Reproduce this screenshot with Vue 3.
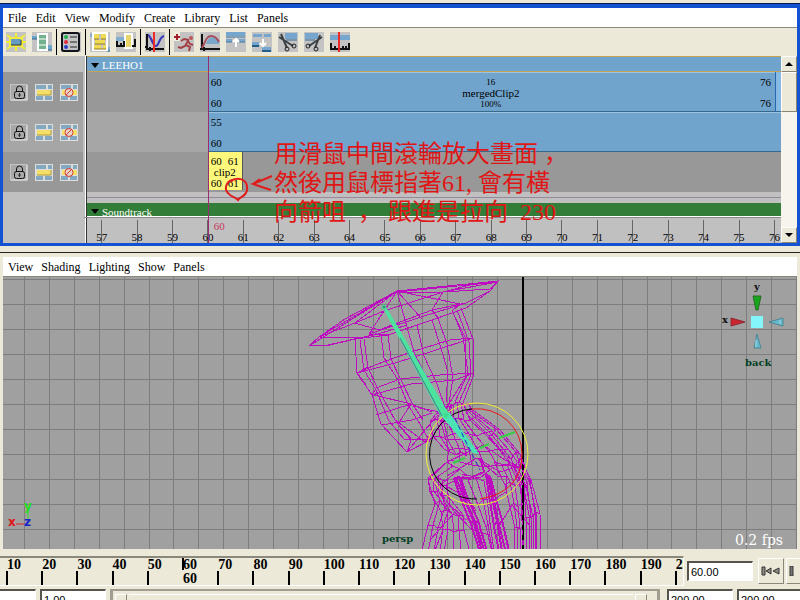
<script setup>
import { ref } from 'vue';

const editorMenu = ['File', 'Edit', 'View', 'Modify', 'Create', 'Library', 'List', 'Panels'];
const panelMenu = ['View', 'Shading', 'Lighting', 'Show', 'Panels'];

const tools = [
  'clip', 'pose', '|', 'outline', '|', 'load', 'frame', '|', 'graph', '|',
  'character', 'warp', 'up', 'down', 'cutLeft', 'cutRight', 'time',
];
const titles = {
  clip: 'Create clip', pose: 'Create pose', outline: 'Outliner', load: 'Load characters',
  frame: 'Frame all', graph: 'Graph curves', character: 'Create character', warp: 'Time warp',
  up: 'Move up', down: 'Move down', cutLeft: 'Trim before', cutRight: 'Trim after', time: 'Go to time',
};

const tracks = [1, 2, 3];
const rulerFrames = Array.from({ length: 20 }, (_, i) => 57 + i);
const sliderFrames = Array.from({ length: 20 }, (_, i) => 10 + i * 10);

const currentTime = ref('60.00');
const rangeStart = ref('1.00');
const playbackStart = ref('1.00');
const playbackEnd = ref('200.00');
const rangeEnd = ref('200.00');

const gridX = Array.from({ length: 33 }, (_, i) => Math.round(24 + i * 24.9));
const gridY = Array.from({ length: 11 }, (_, i) => 279 + i * 25);

// Lines of the hat and the head
const headLines = [
  '309,346 330,345 355,339 388,335 432,320 466,308 490,291 498,281 397,291 309,346',
  '309,346 319,337 397,291 355,323 319,337 359,338 378,334 407,325',
  '319,337 345,319 397,291', '397,292 498,282 443,292 397,292', '443,292 490,289 498,282',
  '355,323 384,311 443,292 478,283', '355,323 379,330 432,310 466,303 490,291',
  '397,291 384,311 369,334 388,335', '397,291 407,327', '397,291 422,319', '397,291 460,304 452,311',
  '443,292 432,310 438,318', '369,334 421,317 466,303', '328,345 359,338', '371,331 381,336',
  '355,339 357,373 372,395 381,424 407,452 430,440 446,416',
  '360,340 364,370 376,390 389,421 404,439 430,440', '364,339 368,368 378,389 395,420 412,440',
  '381,335 384,358 398,380 408,405 420,424 430,442', '388,335 391,359 401,380 413,405 423,420',
  '407,327 415,355 430,383 438,410', '417,325 424,356 437,384 446,410',
  '432,320 440,345 448,372 446,402', '438,318 447,344 453,378 449,403',
  '452,310 463,337 468,373 455,402', '457,310 469,342 471,375 459,402', '461,308 473,339 474,374 463,403',
  '452,311 466,339 465,378 450,402', '357,373 375,365 411,352 450,340 473,338',
  '357,373 395,363 430,352 473,338', '372,395 376,388 400,379 440,375 474,373',
  '372,395 411,384 455,380 474,373', '366,385 357,373 368,367',
  '374,395 411,404 432,412', '376,415 411,404 420,408 440,412', '382,425 412,420 432,413',
  '407,452 411,440 398,424 411,404', '407,452 425,430 438,415', '395,420 425,442 434,430',
];

const parse = (line) => line.split(' ').map((p) => p.split(',').map(Number));

/**
 * Fill the band between two edges with lengthwise lines and cross rungs.
 */
const band = (edgeA, edgeB, count) => {
  const a = parse(edgeA);
  const b = parse(edgeB);
  const at = (i, t) => [
    Math.round(a[i][0] + (b[i][0] - a[i][0]) * t),
    Math.round(a[i][1] + (b[i][1] - a[i][1]) * t + Math.sin(t * 9 + i) * 2),
  ].join(',');
  const lines = [];
  for (let k = 0; k <= count; k++) {
    lines.push(a.map((_, i) => at(i, k / count)).join(' '));
  }
  a.forEach((_, i) => {
    lines.push(Array.from({ length: count + 1 }, (_, k) => at(i, k / count)).join(' '));
  });
  return lines;
};

const bodyLines = [
  // neck and collar
  ...band('446,406 441,420 445,435 449,450 447,462', '468,402 476,418 492,433 509,451 522,468', 6),
  ...band('446,406 436,412 430,420 433,436 444,451', '452,403 450,415 457,425 462,441 467,455', 4),
  // shoulder and arm on the right
  ...band('470,408 500,428 520,452 530,480 535,515 535,552', '466,412 488,436 507,459 521,490 522,520 522,552', 3),
  ...band('520,458 531,478 540,512 541,552', '514,468 524,490 529,517 530,552', 3),
  // left sleeve
  ...band('447,462 428,478 435,502 428,525 422,552', '466,474 446,486 450,506 443,528 440,552', 3),
  ...band('428,478 430,490 441,510 443,530 435,552', '447,479 447,496 463,517 464,531 470,552', 4),
  // shirt
  ...band('468,480 478,503 486,525 492,552', '484,480 487,500 490,525 494,552', 2),
  ...band('494,462 505,483 510,505 515,528 514,552', '514,466 520,485 522,505 522,528 524,552', 3),
  '428,478 447,462 483,445 505,460 520,468', '447,476 477,458 500,472 523,465',
  '446,486 466,497 476,510 466,520 450,505', '430,540 455,512 472,530 490,535', '497,530 512,505 532,528',
  '477,458 498,476 506,476 506,492 496,498', '462,474 480,478 492,468',
];

const lapelLines = [
  ...band('454,478 462,500 471,522 480,552', '461,478 468,500 478,522 487,552', 3),
  ...band('486,474 490,500 494,524 499,552', '491,478 496,500 502,522 509,552', 3),
  '454,478 470,478 484,472 480,458',
];
</script>

<template>
  <div class="app">
    <section class="editor">
      <nav class="menubar">
        <button v-for="item in editorMenu" :key="item" type="button">{{ item }}</button>
      </nav>

      <div class="toolbar">
        <template v-for="(tool, i) in tools" :key="i">
          <span v-if="tool === '|'" class="sep"></span>
          <button v-else type="button" class="tool" :aria-label="titles[tool]">
            <svg viewBox="0 0 20 20" width="20" height="20" fill="none">
              <rect width="20" height="20" fill="#c3c3c3" />
              <g v-if="tool === 'clip'">
                <path d="M1 3l4 3M10 1v4M19 3l-4 3M1 17l4-3M10 19v-4M19 17l-4-3M0 10h3M17 10h3" stroke="#f3ed3c" stroke-width="2" />
                <rect x="4" y="6" width="12" height="8" fill="#659bc5" stroke="#f3ed3c" stroke-width="2" />
                <path d="M5 13h10V8" stroke="#333" />
              </g>
              <g v-else-if="tool === 'pose'">
                <path d="M0 4h9v3H0zM13 13h7v5h-7z" fill="#6fa4cc" />
                <path d="M0 7h5M15 18h5" stroke="#35678b" />
                <rect x="6" y="2" width="9" height="16" fill="#72b38d" stroke="#fff" stroke-width="2" />
                <path d="M6 7h9M6 13h9" stroke="#fff" />
              </g>
              <g v-else-if="tool === 'outline'">
                <rect x="1" y="1" width="17" height="18" rx="2" stroke="#10131c" stroke-width="2" />
                <circle cx="5" cy="5" r="2" fill="#23af50" />
                <circle cx="5" cy="10" r="2" fill="#df293d" />
                <circle cx="5" cy="15" r="2" fill="#2b3fcd" />
                <path d="M9 5h7M9 10h7M9 15h7" stroke="#222" />
              </g>
              <g v-else-if="tool === 'load'">
                <path d="M0 2h5v3H0zM17 15h3v4h-3z" fill="#7faed1" />
                <path d="M17 19h3" stroke="#35678b" />
                <rect x="3" y="1" width="14" height="17" stroke="#fff" stroke-width="2" />
                <path d="M4 2h5v5H4zM11 2h5v5h-5zM5 8h10v4H5zM4 13h7v4H4zM13 13h3v4h-3z" fill="#f0db55" />
                <path d="M4 7h5M11 7h5M5 12h10M4 17h12" stroke="#967f20" />
              </g>
              <g v-else-if="tool === 'frame'">
                <path d="M0 5h8v4H0z" fill="#7faed1" />
                <rect x="9" y="2" width="7" height="14" fill="#e8d469" stroke="#fff" stroke-width="2" />
                <path d="M0 14h8V9M1 9v5M5 11v3M16 14h3V7" stroke="#111" stroke-width="2" />
              </g>
              <g v-else-if="tool === 'graph'">
                <path d="M2 2v15h17M0 15h3M5 15v4" stroke="#111" stroke-width="2" />
                <path d="M3 5c6 0 5 9 8 9s4-9 8-10" stroke="#c43b60" />
                <path d="M3 3c3 0 4 11 8 11 3 0 3-9 8-10" stroke="#3338bd" stroke-width="2" />
                <path d="M9 0v20" stroke="#ef2929" stroke-width="2" />
              </g>
              <g v-else-if="tool === 'character'">
                <rect width="6" height="9" fill="#efece0" />
                <path d="M3 2v6M0 5h6" stroke="#a12029" stroke-width="2" />
                <circle cx="17" cy="6" r="2" fill="#bd5758" />
                <path d="M15 8l-5-1-3 2M14 9l-3 5-4 2-3-1M12 13l4 2-1 4M14 9l2 3 3 1" stroke="#a44043" stroke-width="2" />
              </g>
              <g v-else-if="tool === 'warp'">
                <path d="M6 12c2-8 8-9 13-3v3z" fill="#78a7ca" />
                <path d="M2 2v15h18M0 17h4M4 15v4" stroke="#111" stroke-width="2" />
                <path d="M2 16C6 8 7 4 11 4s6 2 8 6" stroke="#a64c5c" stroke-width="2" />
              </g>
              <g v-else-if="tool === 'up'">
                <path d="M0 0h19v4H0zM0 7h6v3H0zM13 7h6v3h-6z" fill="#76a6cd" />
                <path d="M0 5h19M0 10h6M13 10h6" stroke="#477aa0" />
                <path d="M10 15V8M7 10l3-3 3 3" stroke="#fff" stroke-width="2" />
              </g>
              <g v-else-if="tool === 'down'">
                <path d="M1 2h9v3H1zM12 2h7v3h-7zM0 10h7v3H0zM10 15h9v4h-9z" fill="#76a6cd" />
                <path d="M0 14h7M10 19h9" stroke="#235f8c" stroke-width="2" />
                <path d="M11 7v6M8 11l3 3 3-3" stroke="#fff" stroke-width="2" />
              </g>
              <g v-else-if="tool === 'cutLeft'">
                <path d="M7 1h12v6H7z" fill="#76a6cd" />
                <path d="M8 8h11" stroke="#35678b" />
                <path d="M1 5l14 9M3 2l6 14" stroke="#3c4145" stroke-width="2" />
                <circle cx="9" cy="17" r="2" stroke="#222" />
                <circle cx="16" cy="14" r="2" stroke="#222" />
              </g>
              <g v-else-if="tool === 'cutRight'">
                <path d="M1 1h13v6H1z" fill="#76a6cd" />
                <path d="M1 8h10" stroke="#35678b" />
                <path d="M18 5L5 14M16 3l-5 13" stroke="#3c4145" stroke-width="2" />
                <circle cx="4" cy="14" r="2" stroke="#222" />
                <circle cx="12" cy="17" r="2" stroke="#222" />
              </g>
              <g v-else>
                <path d="M0 3h20v5H0z" fill="#76a6cd" />
                <path d="M0 17h20M1 11v6M5 14v3M13 14v3M16 14v3M19 11v6" stroke="#111" stroke-width="2" />
                <path d="M9 0v20" stroke="#ef2929" stroke-width="2" />
              </g>
            </svg>
          </button>
        </template>
      </div>

      <div class="trax">
        <div class="gutter">
          <div class="gutter-head"></div>
          <div v-for="n in tracks" :key="n" class="track-controls">
            <button type="button" class="mini" aria-label="Lock">
              <svg viewBox="0 0 18 17" width="18" height="17" fill="none">
                <rect width="18" height="17" fill="#a9a9a9" />
                <path d="M0 16V0h17" stroke="#ddd" />
                <path d="M17 1v15H1" stroke="#eee" />
                <path d="M6.500 8V5q0-3 3-3t3 3v3" stroke="#111" />
                <rect x="4.500" y="7.500" width="10" height="7" rx="2" stroke="#111" />
                <path d="M9.500 9v4M8 11h3" stroke="#333" />
              </svg>
            </button>
            <button type="button" class="mini" aria-label="Solo">
              <svg viewBox="0 0 18 17" width="18" height="17" fill="none">
                <rect width="18" height="17" fill="#ddd" />
                <path d="M1 1h10v4H1zM13 1h4v4h-4zM1 12h7v4H1zM10 12h7v4h-7z" fill="#84a8bf" />
                <rect x="2" y="6" width="14" height="5" fill="#f4df69" />
                <path d="M2 11h14V6" stroke="#ae9831" />
              </svg>
            </button>
            <button type="button" class="mini" aria-label="Mute">
              <svg viewBox="0 0 18 17" width="18" height="17" fill="none">
                <rect width="18" height="17" fill="#ddd" />
                <path d="M1 1h10v4H1zM13 1h4v4h-4zM1 12h7v4H1zM10 12h7v4h-7z" fill="#84a8bf" />
                <rect x="2" y="6" width="15" height="5" fill="#f4df69" />
                <circle cx="9" cy="8.500" r="4" stroke="#d43d34" fill="#e8d4c8" />
                <path d="M6 11l6-6" stroke="#d43d34" />
              </svg>
            </button>
          </div>
        </div>

        <div class="tracks">
          <div class="group-head"><span class="tri"></span>LEEHO1</div>
          <div class="track">
            <div class="blank"></div>
            <div class="clip">
              <div class="col"><span>60</span><span>60</span></div>
              <div class="clip-name"><small>16</small><span>mergedClip2</span><small>100%</small></div>
              <div class="col"><span>76</span><span>76</span></div>
            </div>
            <div class="clip-hold"></div>
          </div>
          <div class="track even">
            <div class="blank"></div>
            <div class="clip">
              <div class="col"><span>55</span><span>60</span></div>
            </div>
          </div>
          <div class="track">
            <div class="blank"></div>
            <div class="clip yellow">
              <div class="pair"><span>60</span><span>61</span></div>
              <div class="name">clip2</div>
              <div class="pair"><span>60</span><span>61</span></div>
            </div>
          </div>
          <div class="spacer"></div>
          <div class="sound-head"><span class="tri"></span>Soundtrack</div>
          <div class="ruler">
            <span v-for="f in rulerFrames" :key="f">{{ f }}</span>
          </div>
          <div class="playhead"><span>60</span></div>
          <div class="note">
            <svg viewBox="0 0 60 36" width="60" height="36" fill="none" stroke="#e01c1c" stroke-width="2">
              <path d="M9 6C3 8 1 15 5 19c3 4 7 4 10 7 2-4 8-3 9-10C25 8 20 4 13 5c-2 0-4 1-5 3" />
              <path d="M49 2L30 10l18 6M37 5l-7 5" />
            </svg>
            <p>用滑鼠中間滾輪放大畫面 ，<br>然後用鼠標指著61, 會有橫<br>向箭咀 &nbsp;， 跟進是拉向 &nbsp;230</p>
          </div>
        </div>

        <div class="scrollbar">
          <button type="button" aria-label="Scroll up"><i class="arrow up"></i></button>
          <div class="thumb"></div>
          <div class="rail"></div>
          <button type="button" aria-label="Scroll down"><i class="arrow"></i></button>
        </div>
      </div>
    </section>

    <section class="panel">
      <nav class="menubar">
        <button v-for="item in panelMenu" :key="item" type="button">{{ item }}</button>
      </nav>
      <div class="viewport">
        <svg class="scene" viewBox="3 277 794 272" preserveAspectRatio="xMidYMin slice" fill="none">
          <g stroke="#7d7d7d" shape-rendering="crispEdges">
            <line v-for="x in gridX" :key="'x' + x" :x1="x" :x2="x" y1="277" y2="549" />
            <line v-for="y in gridY" :key="'y' + y" x1="3" x2="797" :y1="y" :y2="y" />
          </g>
          <path d="M523 277v272" stroke="#000" stroke-width="2" />
          <g stroke="#bd0cc0" shape-rendering="crispEdges">
            <polyline v-for="(l, i) in headLines" :key="'h' + i" :points="l" />
            <polyline v-for="(l, i) in bodyLines" :key="'b' + i" :points="l" />
            <polyline v-for="(l, i) in lapelLines" :key="'l' + i" :points="l" stroke-width="2" />
          </g>
          <path d="M523 465v84" stroke="#000" stroke-width="2" stroke-dasharray="5 5" />
          <circle cx="477" cy="454" r="51" stroke="#f2ee35" />
          <path d="M472 409a45 45 0 0 0 5 90" stroke="#000" />
          <path d="M472 409a45 45 0 0 1 50 45q0 38-42 45" stroke="#f01616" />
          <path d="M453 463l12-5M480 448l9-4M499 438l16-6" stroke="#35cf45" stroke-width="2" />
          <path d="M384 306l4 4 61 104-8 3-58-109z" fill="#4ce39f" />
          <path d="M400 338l42 78" stroke="#48788f" />
          <path d="M449 412l30 42-6-1-31-36z" fill="#4ce3b4" />
          <path d="M455 418l10 22 15 30" stroke="#2222cf" stroke-dasharray="5 3" />
          <circle cx="384" cy="307" r="2" fill="#398f79" stroke="#4ce39f" />
          <circle cx="446" cy="415" r="3" fill="#3ddc91" stroke="#4ce39f" />
          <path d="M16 524h8" stroke="#df2525" />
          <path d="M28 511v8" stroke="#31e331" />
          <g class="axis local">
            <text x="8" y="526" fill="#e01616">x</text>
            <text x="24" y="526" fill="#1621c8">z</text>
            <text x="24" y="510" fill="#20df20">y</text>
          </g>
          <g class="axis">
            <text x="722" y="323" fill="#111">x</text>
            <text x="754" y="290" fill="#111">y</text>
          </g>
          <path d="M753 296h8l-3 14h-2z" fill="#17a51c" stroke="#246d24" />
          <path d="M731 318l14 4-14 4z" fill="#c92630" stroke="#8e2933" />
          <path d="M783 318l-14 4 14 4zM757 334l4 14h-7z" fill="#65b8cb" stroke="#4d8794" />
          <path d="M780 320v4M756 340v7" stroke="#a7dce5" />
          <rect x="751" y="316" width="12" height="12" fill="#83f5fb" />
          <g class="camera">
            <text x="745" y="366">back</text>
            <text x="382" y="542">persp</text>
          </g>
          <text class="fps" x="735" y="545">0.2 fps</text>
        </svg>
      </div>
    </section>

    <footer>
      <div class="time-row">
        <div class="time-slider">
          <span v-for="f in sliderFrames" :key="f" :class="{ current: f === 60 }">{{ f }}<b v-if="f === 60">60</b></span>
        </div>
        <input v-model="currentTime" type="text" class="current-time" aria-label="Current time" />
        <button type="button" class="play" aria-label="Go to start">
          <svg viewBox="0 0 20 10" width="20" height="10">
            <path d="M1 1h3v8H1zM10 2v6L5 5zM18 2v6l-6-3z" fill="#8b8b83" stroke="#333" />
          </svg>
        </button>
        <button type="button" class="play" aria-label="Step back">
          <svg viewBox="0 0 20 10" width="20" height="10">
            <path d="M1 0h3v10H1z" fill="#777" stroke="#333" />
          </svg>
        </button>
      </div>
      <div class="range-row">
        <input v-model="rangeStart" type="text" class="first" aria-label="Animation start" />
        <input v-model="playbackStart" type="text" aria-label="Playback start" />
        <div class="range"><i></i><div></div><i></i></div>
        <input v-model="playbackEnd" type="text" aria-label="Playback end" />
        <input v-model="rangeEnd" type="text" aria-label="Animation end" />
      </div>
    </footer>
  </div>
</template>

<style>
body {
  margin: 0;
  overflow: hidden;
}
</style>

<style scoped>
.app {
  display: flex;
  flex-direction: column;
  height: 100vh;
  overflow: hidden;
  background: #ece9d8;
  color: #000;
  font-family: "Liberation Serif", "Noto Sans CJK JP", serif;
  font-size: 12px;
  line-height: 12px;
}
button {
  font: inherit;
  color: inherit;
  padding: 0;
  border: 0;
  background: none;
}
svg {
  display: block;
}
.editor {
  flex: none;
  margin-top: 4px;
  border: 3px solid #1352d0;
  border-top: 4px solid #1352d0;
  box-shadow: 0 -1px #0a1a50;
}
.menubar {
  display: flex;
  gap: 9px;
  height: 19px;
  padding-left: 5px;
  background: #fff;
  border-bottom: 1px solid #8a887c;
}
.toolbar {
  display: flex;
  align-items: center;
  gap: 6px;
  height: 28px;
  padding-left: 3px;
  background: #ece9d8;
}
.sep {
  width: 1px;
  height: 26px;
  margin: 0 -2px;
  background: #000;
}
.trax {
  display: flex;
  background: #c0c0c0;
  font-size: 11px;
}
.gutter {
  width: 80px;
  margin-right: 2px;
}
.gutter-head {
  height: 16px;
}
.track-controls {
  display: flex;
  align-items: center;
  gap: 7px;
  height: 40px;
  padding-left: 7px;
  background: #989898;
}
.track-controls:nth-child(3) {
  background: #a6a6a6;
}
.tracks {
  position: relative;
  flex: 1;
  min-width: 0;
  border-left: 1px solid #fff;
  box-shadow: inset 1px 0 #333;
  padding-left: 1px;
}
.group-head,
.sound-head {
  display: flex;
  align-items: center;
  gap: 3px;
  box-sizing: border-box;
  padding-left: 4px;
  color: #fff;
}
.group-head {
  height: 16px;
  padding-top: 2px;
  background: #70a4cc;
  border-top: 1px solid #c4a454;
  border-bottom: 1px solid #c4a454;
}
.sound-head {
  height: 14px;
  padding-top: 4px;
  background: #327d38;
  border-bottom: 1px solid #fff;
  overflow: hidden;
}
.tri {
  border: 4px solid transparent;
  border-top: 5px solid #000;
  border-bottom: 0;
}
.track {
  display: flex;
  height: 40px;
  background: #989898;
}
.track.even {
  background: #a6a6a6;
}
.blank {
  width: 17.4%;
}
.clip {
  flex: 1;
  display: flex;
  justify-content: space-between;
  box-sizing: border-box;
  padding: 0 4px 0 3px;
  background: #70a4cc;
  border-top: 1px solid #9ac3e0;
  border-bottom: 1px solid #38688c;
}
.col {
  display: flex;
  flex-direction: column;
  justify-content: space-between;
  padding: 3px 0 2px;
}
.clip-name {
  display: flex;
  flex-direction: column;
  align-items: center;
  padding-top: 4px;
  line-height: 11px;
}
.clip-name small {
  font-size: 9px;
}
.clip-hold {
  width: 6px;
  background: #86b9e4;
  border-left: 1px solid #2868ae;
  border-bottom: 1px solid #38688c;
  box-sizing: border-box;
}
.clip.yellow {
  flex: none;
  width: 35px;
  height: 38px;
  display: block;
  padding: 4px 3px 0 3px;
  background: #fdf87c;
  border: 0;
  border-right: 1px solid #555;
  line-height: 11px;
}
.pair {
  display: flex;
  justify-content: space-between;
}
.name {
  text-align: center;
}
.spacer {
  height: 11px;
  background: linear-gradient(#c0c0c0 5px, #96899c 5px, #96899c 6px, #c0c0c0 6px);
}
.ruler {
  display: flex;
  height: 25px;
  margin-left: -3px;
  border-top: 1px solid #888;
}
.ruler span {
  flex: 0 0 5.08%;
  box-sizing: border-box;
  height: 25px;
  padding-top: 13px;
  text-align: center;
  background: linear-gradient(#666, #666) center 2px / 1px 24px no-repeat;
}
.playhead {
  position: absolute;
  top: 0;
  bottom: 0;
  left: 17.5%;
  border-left: 1px solid #9a2c70;
}
.playhead span {
  position: absolute;
  left: 5px;
  bottom: 11px;
  color: #c8365e;
}
.note {
  position: absolute;
  left: 137px;
  top: 84px;
  display: flex;
  color: #e01616;
}
.note svg {
  margin-top: 34px;
}
.note p {
  margin: 0 0 0 -9px;
  font-size: 24px;
  font-weight: 400;
  line-height: 29px;
  white-space: nowrap;
}
.scrollbar {
  display: flex;
  flex-direction: column;
  width: 16px;
  background: #f6f4ec;
}
.scrollbar button,
.thumb {
  box-sizing: border-box;
  height: 16px;
  background: #ece9d8;
  border: 1px solid #fff;
  border-right-color: #888577;
  border-bottom-color: #888577;
}
.scrollbar button {
  display: flex;
  align-items: center;
  justify-content: center;
}
.thumb {
  height: 40px;
}
.rail {
  flex: 1;
}
.arrow {
  border: 4px solid transparent;
  border-top-color: #000;
  border-bottom: 0;
}
.arrow.up {
  border: 4px solid transparent;
  border-bottom-color: #000;
  border-top: 0;
}
.panel {
  flex: 1;
  min-height: 0;
  display: flex;
  flex-direction: column;
  margin-top: 6px;
  padding: 4px 3px 0;
  border-top: 1px solid #222;
}
.panel .menubar {
  flex: none;
  gap: 8px;
}
.viewport {
  flex: 1;
  min-height: 0;
  background: #a0a0a0;
}
.scene {
  width: 100%;
  height: 100%;
}
.axis,
.camera {
  font-family: "DejaVu Serif", serif;
  font-size: 10px;
  font-weight: bold;
}
.axis.local {
  font-family: "DejaVu Sans", sans-serif;
  font-size: 12px;
}
.camera {
  fill: #003f24;
}
.fps {
  font-family: "DejaVu Serif", serif;
  font-size: 14px;
  fill: #fff;
}
footer {
  flex: none;
  padding-top: 7px;
}
.time-row {
  display: flex;
  align-items: center;
  height: 30px;
  overflow: hidden;
}
.time-slider {
  flex: 1;
  min-width: 0;
  display: flex;
  box-sizing: border-box;
  height: 30px;
  padding-left: 6px;
  overflow: hidden;
  border-top: 2px solid #8a887c;
  border-right: 1px solid #fff;
  border-bottom: 1px solid #fff;
}
.time-slider span {
  flex: 0 0 5.2%;
  box-sizing: border-box;
  height: 28px;
  padding-left: 1px;
  font-size: 14px;
  font-weight: bold;
  line-height: 14px;
  background: linear-gradient(#000, #000) 0 13px / 2px 15px no-repeat;
}
.time-slider b {
  display: block;
}
.time-slider .current {
  background: linear-gradient(#000, #000) 0 0 / 2px 12px no-repeat;
}
input {
  box-sizing: border-box;
  width: 66px;
  height: 20px;
  padding: 0 0 0 2px;
  border: 1px solid #fff;
  border-top: 2px solid #55534c;
  border-left: 2px solid #55534c;
  background: #fff;
  color: #000;
  font-family: "Liberation Sans", sans-serif;
  font-size: 11px;
}
.current-time {
  margin: 0 4px 0 3px;
}
.play {
  display: flex;
  align-items: center;
  justify-content: center;
  flex: none;
  box-sizing: border-box;
  width: 26px;
  height: 26px;
  margin-left: 1px;
  border: 1px solid #fff;
  border-right-color: #8a887c;
  border-bottom-color: #8a887c;
}
.play:last-child {
  margin-left: 2px;
  margin-right: -12px;
  justify-content: flex-start;
  padding-left: 2px;
}
.range-row {
  display: flex;
  gap: 3px;
  height: 14px;
  padding-top: 3px;
  box-sizing: border-box;
  overflow: hidden;
}
.range-row input {
  flex: none;
  margin-right: 1px;
}
.range-row input:last-child {
  margin-right: -3px;
}
.range-row .first {
  width: 66px;
  margin-left: -30px;
}
.range {
  flex: 1;
  display: flex;
  gap: 2px;
  height: 20px;
  margin-right: 4px;
  padding: 3px 10px 0 2px;
  box-sizing: border-box;
  border: 2px solid #a19e91;
  border-width: 2px 3px;
}
.range i {
  width: 10px;
  border: 1px solid #fff;
  border-right-color: #8a887c;
}
.range div {
  flex: 1;
  border-top: 1px solid #fff;
}
</style>
